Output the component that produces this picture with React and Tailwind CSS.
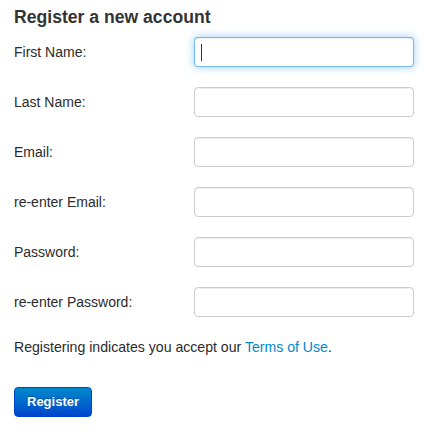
import React from "react";

const fields = [
  "First Name:",
  "Last Name:",
  "Email:",
  "re-enter Email:",
  "Password:",
  "re-enter Password:",
];

export default function App() {
  return (
    <div
      className="w-[446px] h-[435px] bg-white text-[#333333] px-[14px] pt-[5px]"
      style={{ fontFamily: '"Liberation Sans", Arial, Helvetica, sans-serif' }}
    >
      <h3 className="text-[17.6px] leading-[24px] font-bold text-[#333333]">
        Register a new account
      </h3>
      <div className="mt-[8px] flex flex-col gap-[20px]">
        {fields.map((label, i) => (
          <div key={label} className="flex items-center h-[30px]">
            <label className="w-[180px] text-[14px] leading-[20px] text-[#2b2b2b]">{label}</label>
            {i === 0 ? (
              <div className="w-[220px] h-[30px] rounded-[4px] border border-[rgba(82,168,236,0.8)] bg-white shadow-[inset_0_1px_1px_rgba(0,0,0,0.075),0_0_8px_rgba(82,168,236,0.6)] flex items-center pl-[6px]">
                <span className="block w-[1px] h-[17px] bg-[#333333]" />
              </div>
            ) : (
              <input
                type={label.includes("Password") ? "password" : "text"}
                className="w-[220px] h-[30px] rounded-[4px] border border-[#cccccc] bg-white shadow-[inset_0_1px_1px_rgba(0,0,0,0.075)] outline-none px-[6px] text-[14px]"
              />
            )}
          </div>
        ))}
      </div>
      <p className="mt-[20px] text-[14.1px] leading-[20px] text-[#2b2b2b]">
        Registering indicates you accept our{" "}
        <a href="#" className="text-[#0088cc]">
          Terms of Use
        </a>
        .
      </p>
      <button className="mt-[30px] h-[30px] px-[12px] rounded-[4px] border border-[#0044cc] bg-gradient-to-b from-[#0088cc] to-[#0044cc] text-white text-[13px] font-bold [text-shadow:0_-1px_0_rgba(0,0,0,0.25)]">
        Register
      </button>
    </div>
  );
}
